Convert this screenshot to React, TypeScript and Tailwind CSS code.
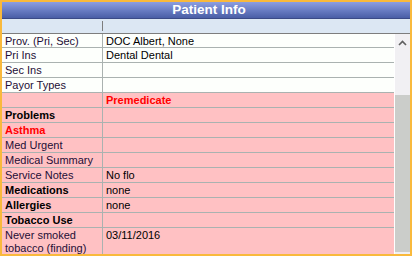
import React from "react";

type Row = {
  label: string;
  value?: string;
  labelClass?: string;
  valueClass?: string;
  pink?: boolean;
};

const rows: Row[] = [
  { label: "Prov. (Pri, Sec)", value: "DOC Albert, None" },
  { label: "Pri Ins", value: "Dental Dental" },
  { label: "Sec Ins" },
  { label: "Payor Types" },
  { label: "", value: "Premedicate", valueClass: "font-bold text-[#ff0000]", pink: true },
  { label: "Problems", labelClass: "font-bold text-black", pink: true },
  { label: "Asthma", labelClass: "font-bold text-[#ff0000]", pink: true },
  { label: "Med Urgent", pink: true },
  { label: "Medical Summary", pink: true },
  { label: "Service Notes", value: "No flo", pink: true },
  { label: "Medications", value: "none", labelClass: "font-bold text-black", pink: true },
  { label: "Allergies", value: "none", labelClass: "font-bold text-black", pink: true },
  { label: "Tobacco Use", labelClass: "font-bold text-black", pink: true },
];

export default function App() {
  return (
    <div className="w-[412px] h-[256px] border-2 border-[#f9b93c] bg-white flex flex-col overflow-hidden font-['Liberation_Sans',Arial,sans-serif] text-[11px]">
      {/* title bar */}
      <div className="h-[17px] shrink-0 bg-gradient-to-b from-[#8c9ee2] to-[#4a5ea6] border-b border-[#3b4a86] flex items-center justify-center">
        <span className="text-white font-bold text-[13.5px] leading-none pl-[6px]">Patient Info</span>
      </div>

      {/* column header */}
      <div className="h-[15px] shrink-0 bg-[#dce7f3] border-b border-[#7d7d7d] flex items-center">
        <div className="w-[100px]" />
        <div className="w-px h-[10px] bg-[#7d7d7d]" />
      </div>

      <div className="flex-1 flex min-h-0">
        <div className="w-[392px] flex flex-col">
          {rows.map((r, i) => (
            <div
              key={i}
              className={
                (i === 0 ? "h-[14px] " : "h-[15px] ") +
                (r.pink ? "bg-[#ffc1c3] " : "bg-[#fdfffc] ") +
                "flex border-b border-[#aab2b0] shrink-0"
              }
            >
              <div
                className={
                  "w-[101px] border-r border-[#aab2b0] pl-[3px] leading-[14px] whitespace-nowrap overflow-hidden " +
                  (r.labelClass ?? "text-[#1e0e36]")
                }
              >
                {r.label}
              </div>
              <div className={"flex-1 pl-[3px] leading-[14px] " + (r.valueClass ?? "text-black")}>
                {r.value}
              </div>
            </div>
          ))}
          <div className="flex-1 flex bg-[#ffc1c3]">
            <div className="w-[101px] border-r border-[#aab2b0] pl-[3px] pt-px leading-[13px] text-[#1e0e36]">
              Never smoked
              <br />
              tobacco (finding)
            </div>
            <div className="flex-1 pl-[3px] pt-px leading-[13px] text-black">03/11/2016</div>
          </div>
        </div>

        <div className="w-px bg-white" />

        {/* scrollbar */}
        <div className="w-[15px] bg-[#f1f0f3] flex flex-col">
          <div className="h-[17px] flex items-center justify-center">
            <svg width="9" height="6" viewBox="0 0 9 6">
              <path d="M1 5 L4.5 1.5 L8 5" fill="none" stroke="#5f5f5f" strokeWidth="1.6" />
            </svg>
          </div>
          <div className="h-[44px]" />
          <div className="flex-1 bg-[#cbcdca]" />
          <div className="h-[2px]" />
        </div>
      </div>
    </div>
  );
}
